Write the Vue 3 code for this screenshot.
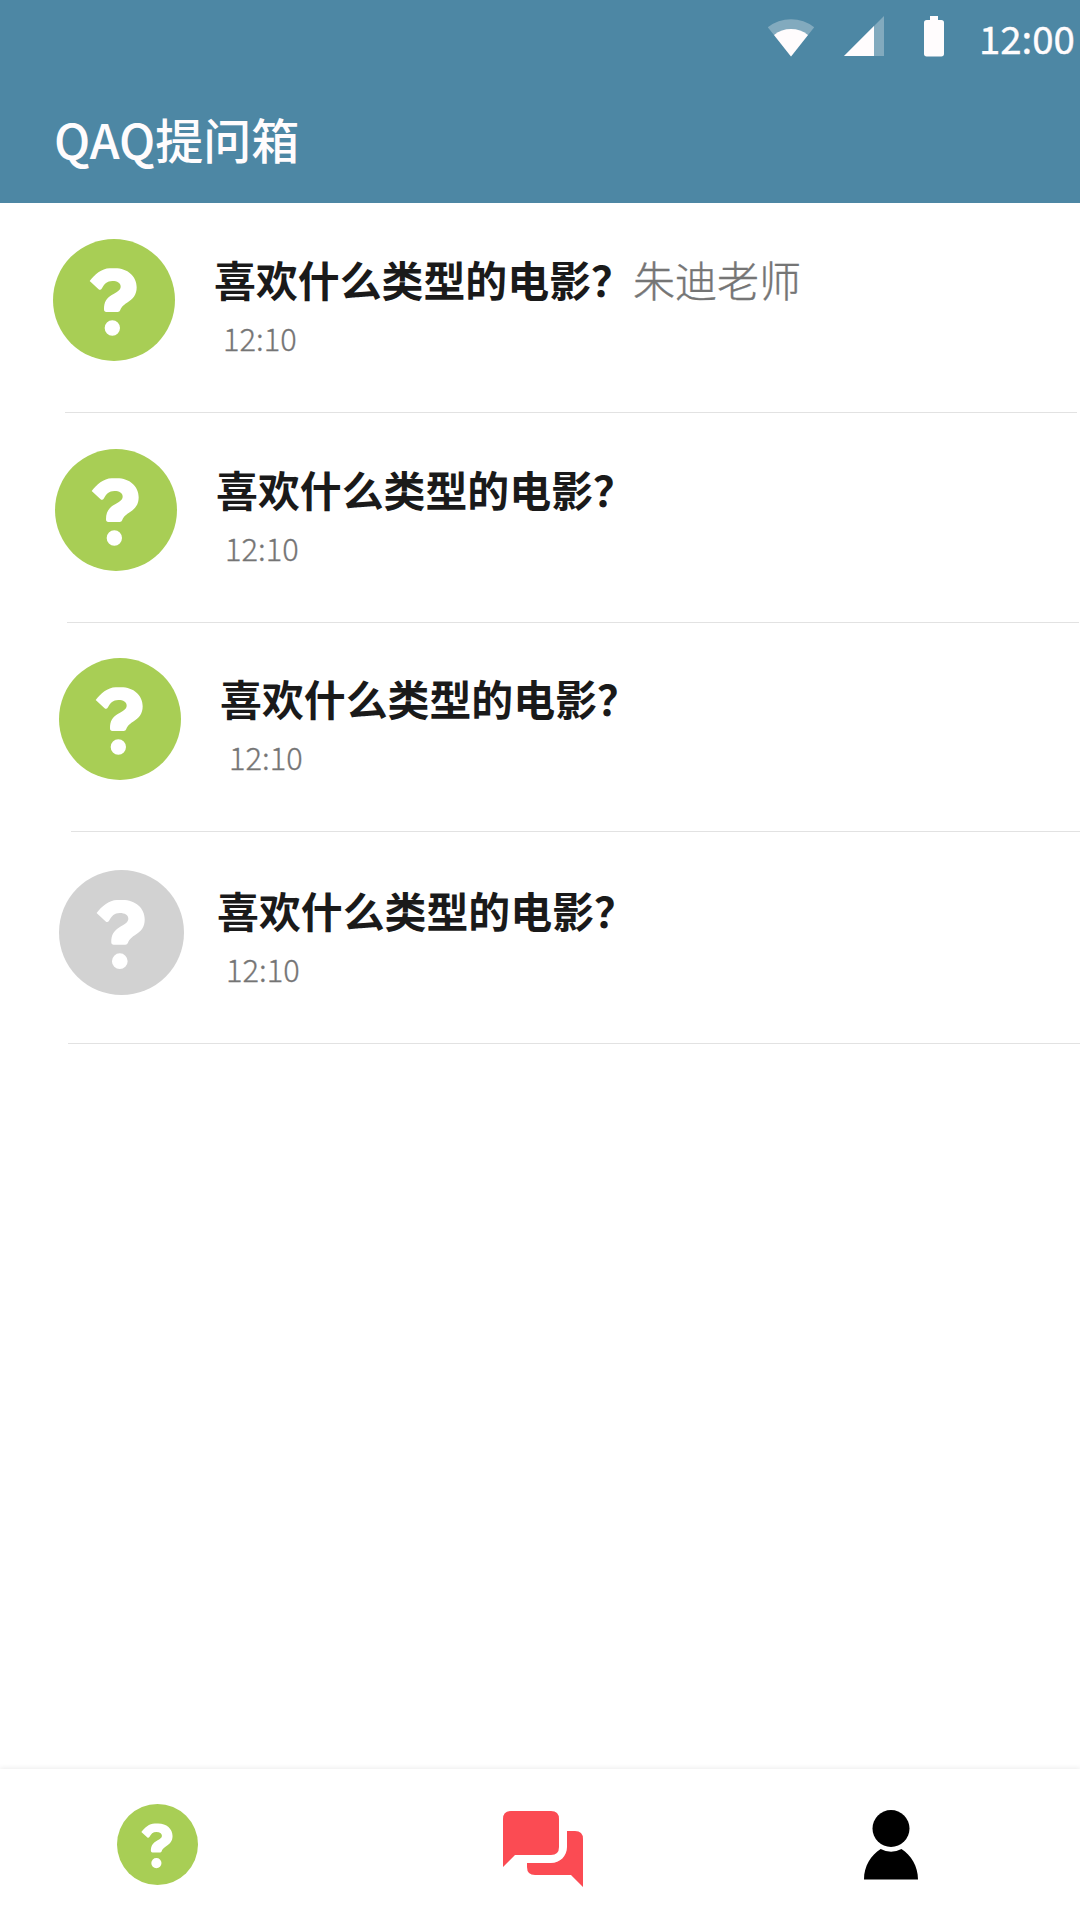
<template>
  <div class="phone">
    <header class="top">
      <div class="status">
        <svg class="wifi" width="48" height="38" viewBox="0 0 48 38">
          <path d="M24 37.5 L0.8 8.3 A37.3 37.3 0 0 1 47.2 8.3 Z" fill="#fffcfd" opacity="0.3" />
          <path d="M24 37.5 L7 16 A27.5 27.5 0 0 1 41 16 Z" fill="#fffcfd" />
        </svg>
        <svg class="signal" width="40" height="40" viewBox="0 0 40 40">
          <path d="M0 40 L40 0 V40 Z" fill="#fffcfd" opacity="0.3" />
          <path d="M0 40 L30 10 V40 Z" fill="#fffcfd" />
        </svg>
        <svg class="battery" width="20" height="41" viewBox="0 0 20 41">
          <path d="M6 0h8v4h3.300q2.700 0 2.700 2.700v31.100q0 2.700-2.700 2.700h-14.600q-2.700 0-2.700-2.700v-31.100q0-2.700 2.700-2.700h3.300z" fill="#fffcfd" />
        </svg>
        <span class="clock">12:00</span>
      </div>
      <h1 class="title">QAQ提问箱</h1>
    </header>

    <main class="list">
      <div v-for="q in questions" :key="q.id" class="row" :class="'row-' + q.id">
        <div class="row-body">
          <svg class="avatar" :class="{ off: !q.active }" viewBox="0 0 366 366">
            <circle cx="183" cy="183" r="183" />
            <path class="mark" :d="mark" />
          </svg>
          <div class="text">
            <div class="line">
              <span class="question">{{ q.title }}</span>
              <span v-if="q.teacher" class="teacher">{{ q.teacher }}</span>
            </div>
            <div class="time">{{ q.time }}</div>
          </div>
        </div>
        <div class="divider"></div>
      </div>
    </main>

    <nav class="tabs">
      <svg class="tab-ask" viewBox="0 0 366 366">
        <circle cx="183" cy="183" r="183" />
        <path class="mark" :d="mark" />
      </svg>
      <svg class="tab-chat" width="80" height="76" viewBox="0 0 80 76">
        <path d="M8 0H48Q56 0 56 8V36Q56 44 48 44H12L0 56V8Q0 0 8 0Z" />
        <path d="M64 20H72Q80 20 80 28V76L68 64H32Q24 64 24 56V52H48C57 52 64 45 64 36Z" />
      </svg>
      <svg class="tab-user" width="54" height="70" viewBox="0 0 54 70">
        <circle cx="27" cy="18.500" r="18.500" />
        <path d="M0 69.500C0 56 7 45 16.700 39Q27 44.500 37.500 39C47 45 54 56 54 69.500Z" />
      </svg>
    </nav>
  </div>
</template>

<script setup>
const questions = [
  { id: 1, title: '喜欢什么类型的电影？', teacher: '朱迪老师', time: '12:10', active: true },
  { id: 2, title: '喜欢什么类型的电影？', time: '12:10', active: true },
  { id: 3, title: '喜欢什么类型的电影？', time: '12:10', active: true },
  { id: 4, title: '喜欢什么类型的电影？', time: '12:10', active: false }
]

// question mark with its dot, shared by the avatars and the first tab
const mark =
  'M110 126C124 108 146 88 170 88H186C224 88 251 112 251 145C251 168 240 180 222 191' +
  'C208 200 204 207 202 213Q200 219 194 219H160Q153 219 153 211C153 190 160 179 175 169' +
  'C190 160 203 154 203 143C203 132 193 126 178 126C162 126 154 135 147 148Q142 156 136 150Z' +
  'M155 267a23 23 0 1 0 46 0a23 23 0 1 0 -46 0Z'
</script>

<style>
body {
  background: #fff;
}
</style>

<style scoped>
.phone {
  width: 1080px;
  height: 1920px;
  display: flex;
  flex-direction: column;
  overflow: hidden;
  background: #fff;
  font-family: 'Noto Sans CJK SC', sans-serif;
}
.top {
  height: 203px;
  flex: none;
  background: #4d87a4;
  color: #fffcfd;
}
.status {
  height: 80px;
  display: flex;
  align-items: flex-start;
}
.wifi {
  margin: 19px 0 0 767px;
}
.signal {
  margin: 16px 0 0 29px;
}
.battery {
  margin: 16px 0 0 40px;
}
.clock {
  margin: 8px 0 0 35px;
  font-size: 38.4px;
  line-height: 58px;
  -webkit-text-stroke: 0.4px #fffcfd;
  white-space: nowrap;
}
.title {
  margin: 23px 0 0 54px;
  font-size: 48px;
  line-height: 70px;
  font-weight: 500;
}
.list {
  flex: 1;
}
.row-1 {
  padding: 36px 0 0 53px;
}
.row-2 {
  padding: 36px 0 0 55px;
}
.row-3 {
  padding: 35px 0 0 59px;
}
.row-4 {
  padding: 38px 0 0 56px;
}
.row-body {
  height: 173px;
  display: flex;
  align-items: flex-start;
}
.avatar {
  width: 122px;
  height: 122px;
  flex: none;
  fill: #a8ce55;
}
.avatar.off {
  width: 125px;
  height: 125px;
  margin: 0 -6px 0 3px;
  fill: #d2d2d2;
}
.mark {
  fill: #fff;
}
.text {
  margin-left: 39px;
}
.line {
  height: 61px;
  margin-top: 9px;
  display: flex;
  font-size: 42px;
  line-height: 61px;
  white-space: nowrap;
}
.question {
  width: 419px;
  color: #1a1a1a;
  font-size: 41.9px;
  line-height: 62px;
  font-weight: 700;
}
.teacher {
  color: #757575;
  font-weight: 300;
  -webkit-text-stroke: 0.4px #757575;
}
.time {
  margin: 6px 0 0 9px;
  color: #757575;
  font-size: 30.8px;
  line-height: 46px;
  font-weight: 300;
  -webkit-text-stroke: 0.3px #757575;
}
.divider {
  width: 1012px;
  height: 1px;
  margin-left: 12px;
  background: #e2e2e2;
}
.tabs {
  height: 151px;
  flex: none;
  display: flex;
  align-items: flex-start;
  background: #fff;
  box-shadow: 0 -1px 5px rgba(0, 0, 0, 0.08);
}
.tab-ask {
  width: 81px;
  height: 81px;
  margin: 35px 0 0 117px;
  fill: #a8ce55;
}
.tab-chat {
  margin: 42px 0 0 305px;
  fill: #fb4b53;
}
.tab-user {
  margin: 41px 0 0 281px;
}
</style>
